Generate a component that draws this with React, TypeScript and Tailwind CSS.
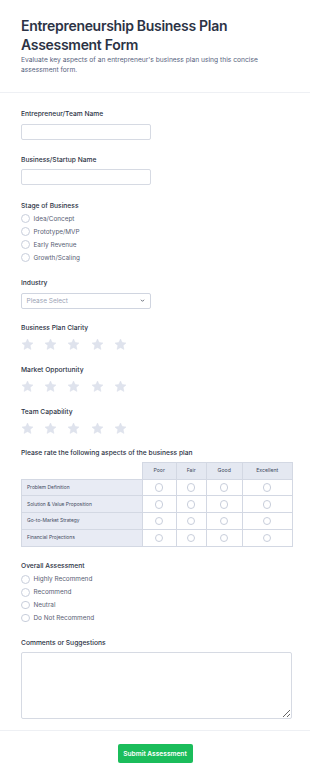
import React from "react";

const Radio = () => (
  <span className="block w-[8.5px] h-[8.5px] rounded-full border border-[#c8cedb] bg-white shrink-0" />
);

const Star = () => (
  <svg viewBox="0 0 24 24" className="w-[13px] h-[13px]">
    <path
      d="M12 1.8l3.05 6.5 7.1.85-5.25 4.9 1.4 7.05L12 17.6l-6.3 3.5 1.4-7.05-5.25-4.9 7.1-.85z"
      fill="#dfe3ed"
      stroke="#d8dde8"
      strokeWidth="0.8"
      strokeLinejoin="round"
    />
  </svg>
);

const Label = ({ children }: { children: React.ReactNode }) => (
  <div className="text-[6.7px] leading-[10px] font-medium text-[#2c3345] h-[10px]">{children}</div>
);

const RadioList = ({ items, row }: { items: string[]; row: string }) => (
  <div className="flex flex-col">
    {items.map((t) => (
      <div key={t} className={`flex items-center gap-[4px] ${row}`}>
        <Radio />
        <span className="text-[6.4px] leading-[10px] text-[#5a6275]">{t}</span>
      </div>
    ))}
  </div>
);

const Stars = () => (
  <div className="flex items-center gap-[10.2px] h-[12px] mt-[6px]">
    {[0, 1, 2, 3, 4].map((i) => (
      <Star key={i} />
    ))}
  </div>
);

export default function App() {
  const rows = [
    "Problem Definition",
    "Solution & Value Proposition",
    "Go-to-Market Strategy",
    "Financial Projections",
  ];
  const cols = [
    { n: "Poor", w: "w-[34px]" },
    { n: "Fair", w: "w-[30px]" },
    { n: "Good", w: "w-[36px]" },
    { n: "Excellent", w: "w-[50px]" },
  ];
  return (
    <div className="w-[310px] min-h-[778px] bg-white font-[Inter,sans-serif]">
      <div className="pl-[21px] pr-[18px] pt-[16px] pb-[17px] border-b border-[#eef0f4]">
        <h1 className="text-[14px] leading-[19px] font-semibold text-[#2c3345] tracking-[-0.3px]">
          Entrepreneurship Business Plan Assessment Form
        </h1>
        <p className="mt-[1px] text-[6.7px] leading-[10px] text-[#57647e]">
          Evaluate key aspects of an entrepreneur's business plan using this concise assessment form.
        </p>
      </div>

      <div className="pl-[21px] pr-[18px] pt-[16px] pb-[11px] border-b border-[#eef0f4] flex flex-col">
        <div>
          <Label>Entrepreneur/Team Name</Label>
          <div className="mt-[4.5px] w-[130px] h-[16px] border border-[#d6dae3] rounded-[2px] bg-white" />
        </div>
        <div className="mt-[15px]">
          <Label>Business/Startup Name</Label>
          <div className="mt-[4.5px] w-[130px] h-[16px] border border-[#d6dae3] rounded-[2px] bg-white" />
        </div>
        <div className="mt-[15.5px]">
          <Label>Stage of Business</Label>
          <div className="mt-[1.5px]">
            <RadioList
              items={["Idea/Concept", "Prototype/MVP", "Early Revenue", "Growth/Scaling"]}
              row="h-[13px]"
            />
          </div>
        </div>
        <div className="mt-[14px]">
          <Label>Industry</Label>
          <div className="mt-[4.5px] w-[130px] h-[16px] border border-[#d0d5e0] rounded-[2px] bg-white flex items-center justify-between pl-[4.5px] pr-[5px]">
            <span className="text-[6.5px] leading-[10px] text-[#9aa3b5]">Please Select</span>
            <svg viewBox="0 0 8 8" className="w-[5px] h-[5px]">
              <polyline points="1.5,2.8 4,5.3 6.5,2.8" fill="none" stroke="#2c3345" strokeWidth="1.1" />
            </svg>
          </div>
        </div>
        <div className="mt-[14px]">
          <Label>Business Plan Clarity</Label>
          <Stars />
        </div>
        <div className="mt-[14px]">
          <Label>Market Opportunity</Label>
          <Stars />
        </div>
        <div className="mt-[14px]">
          <Label>Team Capability</Label>
          <Stars />
        </div>
        <div className="mt-[13.5px]">
          <Label>Please rate the following aspects of the business plan</Label>
          <table className="mt-[4.2px] border-collapse w-[271px] table-fixed">
            <thead>
              <tr className="h-[16.5px]">
                <th className="w-[120.7px] p-0" />
                {cols.map((c) => (
                  <th
                    key={c.n}
                    className={`${c.w} p-0 border border-[#d3d8e3] bg-[#e4e8f1] text-[5.2px] font-normal text-[#3f4a60] text-center align-middle`}
                  >
                    {c.n}
                  </th>
                ))}
              </tr>
            </thead>
            <tbody>
              {rows.map((r) => (
                <tr key={r} className="h-[16.75px]">
                  <td className="p-0 pl-[5px] border border-[#d3d8e3] bg-[#e8ebf4] text-[4.9px] text-[#3f4a60] align-middle">
                    {r}
                  </td>
                  {cols.map((c) => (
                    <td key={c.n} className="p-0 border border-[#d3d8e3] bg-white align-middle">
                      <div className="flex justify-center">
                        <Radio />
                      </div>
                    </td>
                  ))}
                </tr>
              ))}
            </tbody>
          </table>
        </div>
        <div className="mt-[14px]">
          <Label>Overall Assessment</Label>
          <div className="mt-[2.3px]">
            <RadioList
              items={["Highly Recommend", "Recommend", "Neutral", "Do Not Recommend"]}
              row="h-[12.9px]"
            />
          </div>
        </div>
        <div className="mt-[13.4px]">
          <Label>Comments or Suggestions</Label>
          <textarea className="mt-[4.5px] block w-[271px] h-[67px] border border-[#d6dae3] rounded-[2px] bg-white outline-none" />
        </div>
      </div>

      <div className="flex justify-center pt-[12.7px]">
        <button className="h-[19.3px] w-[75px] rounded-[2px] bg-[#1bbd5b] text-white text-[6.6px] font-semibold leading-[10px]">
          Submit Assessment
        </button>
      </div>
    </div>
  );
}
